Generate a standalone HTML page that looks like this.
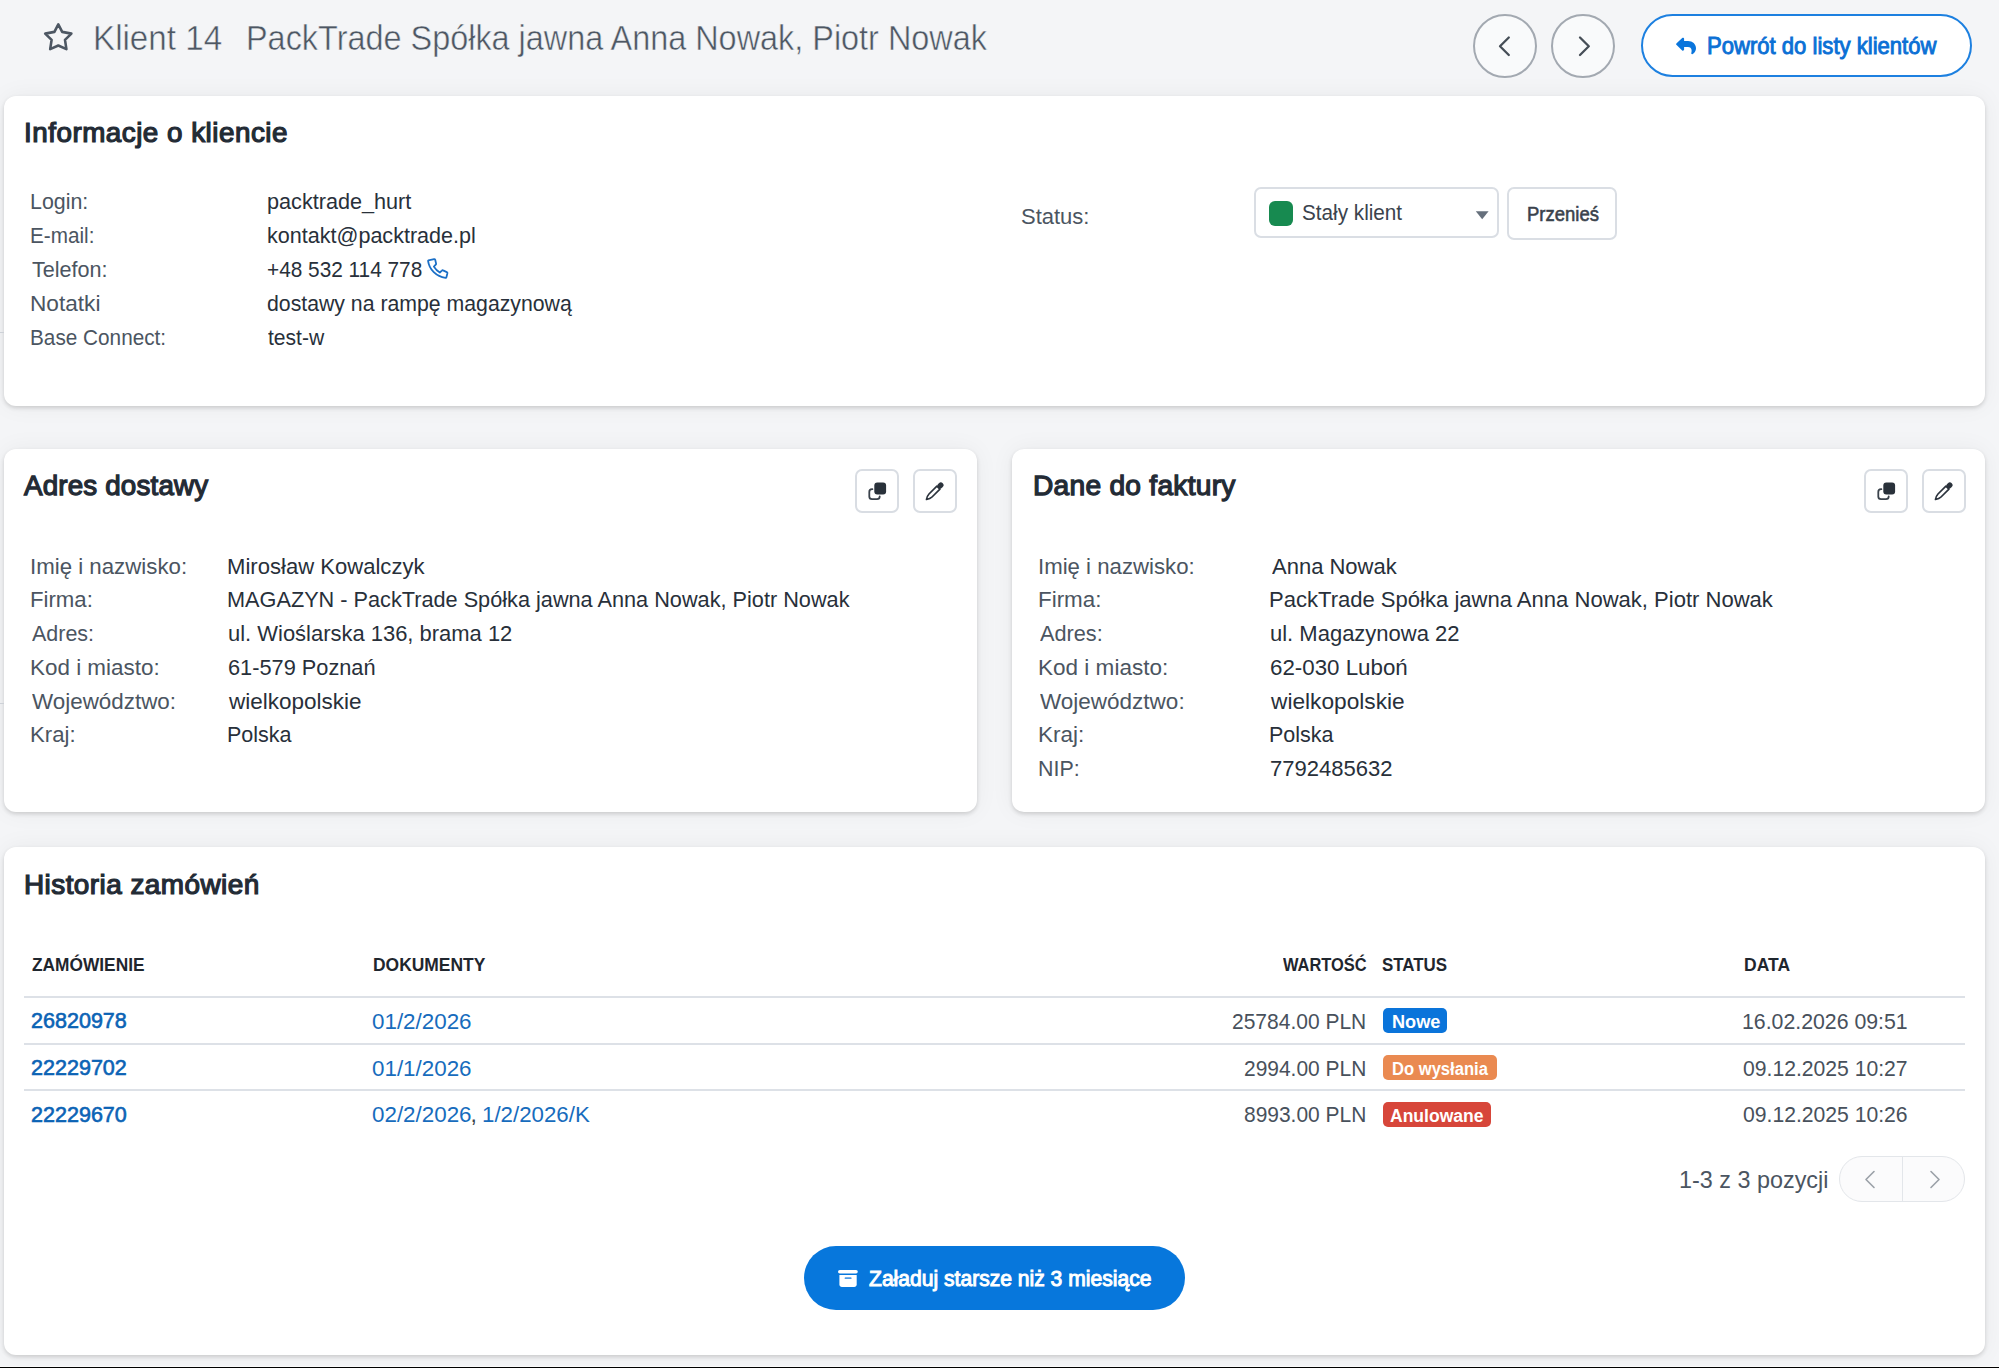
<!DOCTYPE html>
<html><head><meta charset="utf-8">
<style>
html,body{margin:0;padding:0;}
body{width:1999px;height:1368px;background:#f4f5f7;position:relative;overflow:hidden;font-family:"Liberation Sans",sans-serif;}
.t{position:absolute;white-space:nowrap;font-family:"Liberation Sans",sans-serif;}
.card{position:absolute;background:#fff;border-radius:12px;box-shadow:0 0 24px rgba(0,0,0,0.05),0 2px 4px rgba(0,0,0,0.15);}
.abs{position:absolute;}
.circ{position:absolute;width:60px;height:60px;border:2px solid #a3a9b1;border-radius:50%;background:#f9fafb;}
.ibtn{position:absolute;width:40px;height:40px;border:2px solid #d9dde3;border-radius:7px;background:#fff;}
.line{position:absolute;left:24px;width:1941px;height:2px;background:#dde1e7;}
.badge{position:absolute;border-radius:5px;}
</style></head>
<body>
<!-- title star -->
<svg class="abs" style="left:40px;top:19px" width="36" height="36" viewBox="40 19 36 36">
<path d="M58.3,24.4 L62.2,31.9 L71.4,33.6 L65,39.9 L66.4,49.1 L58.3,45.5 L50.2,49.1 L51.6,39.9 L45.2,33.6 L54.4,31.9 Z" fill="none" stroke="#4d5763" stroke-width="2.6" stroke-linejoin="round"/>
</svg>
<!-- nav circles -->
<div class="circ" style="left:1473px;top:14px"></div>
<div class="circ" style="left:1551px;top:14px"></div>
<svg class="abs" style="left:1460px;top:0" width="160" height="90" viewBox="1460 0 160 90">
<path d="M1508.8,37.5 L1500,46.3 L1508.8,55" fill="none" stroke="#464e57" stroke-width="2.3" stroke-linecap="round" stroke-linejoin="round"/>
<path d="M1580,37.5 L1588.8,46.3 L1580,55" fill="none" stroke="#464e57" stroke-width="2.3" stroke-linecap="round" stroke-linejoin="round"/>
</svg>
<!-- back button -->
<div class="abs" style="left:1641px;top:14px;width:327px;height:59px;border:2px solid #1d80e0;border-radius:32px;background:#fff"></div>
<svg class="abs" style="left:1670px;top:30px" width="32" height="30" viewBox="1670 30 32 30">
<path d="M1676.6,43.3 L1682.2,38 C1682.9,37.3 1684.1,37.8 1684.1,38.8 L1684.1,41 L1688,41 C1692.6,41 1696,44.2 1696,48.2 C1696,50.6 1694.8,52.6 1692.7,54.1 C1691.9,54.6 1691,54 1691.3,53.1 C1692.2,50.6 1691.6,47.1 1688,47.1 L1684.1,47.1 L1684.1,49.6 C1684.1,50.6 1682.9,51.1 1682.2,50.4 L1676.6,45.1 C1676,44.6 1676,43.8 1676.6,43.3 Z" fill="#0a75dc"/>
</svg>

<!-- card 1 -->
<div class="card" style="left:4px;top:96px;width:1981px;height:310px"></div>
<svg class="abs" style="left:424px;top:255px" width="28" height="28" viewBox="424 255 28 28">
<path d="M428.4,260.4 L434.1,259.2 C434.6,259.1 435,259.3 435.2,259.8 L436.1,263.6 C436.2,264 436,264.4 435.7,264.7 L433.9,266.6 C435.4,269.1 437.4,271.1 439.8,272.5 L441.9,270.6 C442.2,270.3 442.7,270.2 443.1,270.4 L446.8,272.1 C447.3,272.3 447.5,272.8 447.4,273.3 L446.4,277.2 C446.3,277.6 445.9,277.9 445.5,277.8 C436.2,276.6 429.3,269.6 428.1,261.2 C428,260.8 428.1,260.5 428.4,260.4 Z" fill="none" stroke="#1b6fc6" stroke-width="1.8" stroke-linejoin="round"/>
</svg>
<!-- status dropdown -->
<div class="abs" style="box-sizing:border-box;left:1254px;top:187px;width:245px;height:51px;border:2px solid #dadee4;border-radius:7px;background:#fff"></div>
<div class="abs" style="left:1269px;top:201px;width:24.3px;height:24.8px;border-radius:6px;background:#178a50"></div>
<svg class="abs" style="left:1470px;top:205px" width="24" height="20" viewBox="1470 205 24 20">
<path d="M1475.8,211.2 L1488.6,211.2 L1482.2,219.2 Z" fill="#66707c"/>
</svg>
<div class="abs" style="box-sizing:border-box;left:1507px;top:187px;width:110px;height:53px;border:2px solid #dadee4;border-radius:7px;background:#fff"></div>

<!-- card 2 -->
<div class="card" style="left:4px;top:449px;width:973px;height:363px"></div>
<div class="ibtn" style="left:855px;top:469px"></div>
<div class="ibtn" style="left:913px;top:469px"></div>
<!-- card 3 -->
<div class="card" style="left:1012px;top:449px;width:973px;height:363px"></div>
<div class="ibtn" style="left:1864px;top:469px"></div>
<div class="ibtn" style="left:1922px;top:469px"></div>
<svg class="abs" style="left:0;top:460px" width="1999" height="60" viewBox="0 460 1999 60">
<defs>
<g id="copyic">
<path d="M872.4,489.2 L872,489.2 C870.5,489.2 869.3,490.4 869.3,491.9 L869.3,496.5 C869.3,498 870.5,499.2 872,499.2 L877,499.2 C878.5,499.2 879.7,498 879.7,496.5 L879.7,496.4" fill="none" stroke="#3a424b" stroke-width="1.8" stroke-linecap="round"/>
<rect x="874.3" y="482.4" width="11.8" height="12.2" rx="3" fill="#29313a"/>
</g>
<g id="pencil">
<path d="M926.5,499.5 C926.9,497.4 927.7,495.3 928.98,493.98 L936.90,486.06 L939.94,489.10 L932.02,497.02 C930.7,498.3 928.6,499.1 926.5,499.5 Z" fill="none" stroke="#2b333c" stroke-width="1.7" stroke-linejoin="round"/>
<line x1="940.05" y1="485.95" x2="940.82" y2="485.18" stroke="#2b333c" stroke-width="5.4" stroke-linecap="round"/>
</g>
</defs>
<use href="#copyic"/>
<use href="#pencil"/>
<use href="#copyic" x="1009"/>
<use href="#pencil" x="1009"/>
</svg>

<!-- card 4 -->
<div class="card" style="left:4px;top:847px;width:1981px;height:508px"></div>
<div class="line" style="top:996px"></div>
<div class="line" style="top:1043px"></div>
<div class="line" style="top:1089px"></div>
<div class="badge" style="left:1383px;top:1008px;width:64px;height:25px;background:#0a74da"></div>
<div class="badge" style="left:1383px;top:1055px;width:114px;height:25px;background:#ea8a51"></div>
<div class="badge" style="left:1383px;top:1102px;width:108px;height:25px;background:#d7463a"></div>
<!-- pagination -->
<div class="abs" style="left:1839px;top:1156px;width:124px;height:44px;border:1px solid #e3e6ea;border-radius:23px;background:#fbfbfc"></div>
<div class="abs" style="left:1902px;top:1157px;width:1px;height:44px;background:#e3e6ea"></div>
<svg class="abs" style="left:1850px;top:1160px" width="110" height="40" viewBox="1850 1160 110 40">
<path d="M1874,1171.5 L1866,1179.5 L1874,1187.5" fill="none" stroke="#9aa0a7" stroke-width="1.6" stroke-linecap="round" stroke-linejoin="round"/>
<path d="M1931,1171.5 L1939,1179.5 L1931,1187.5" fill="none" stroke="#9aa0a7" stroke-width="1.6" stroke-linecap="round" stroke-linejoin="round"/>
</svg>
<!-- load button -->
<div class="abs" style="left:804px;top:1246px;width:381px;height:64px;border-radius:32px;background:#0777dc"></div>
<svg class="abs" style="left:834px;top:1265px" width="28" height="26" viewBox="834 1265 28 26">
<rect x="838" y="1270" width="19.8" height="3.6" rx="1.8" fill="#fff"/>
<path d="M839.4,1274.9 L856.7,1274.9 L856.7,1284.4 C856.7,1285.8 855.6,1286.9 854.2,1286.9 L841.9,1286.9 C840.5,1286.9 839.4,1285.8 839.4,1284.4 Z" fill="#fff"/>
<rect x="844.6" y="1277.3" width="7" height="1.7" rx="0.85" fill="#4f9be4"/>
</svg>

<div class="abs" style="left:0;top:332px;width:4px;height:1px;background:#cdd1d7"></div>
<div class="abs" style="left:0;top:703px;width:4px;height:1px;background:#cdd1d7"></div>
<div class="t" style="left:92.90px;top:20.96px;font-size:34.88px;line-height:34.88px;color:#4d5763;letter-spacing:0.000px;-webkit-text-stroke:0.50px #f4f5f7;transform:scaleX(0.9514);transform-origin:0 0;">Klient 14</div>
<div class="t" style="left:245.98px;top:20.96px;font-size:34.88px;line-height:34.88px;color:#4d5763;letter-spacing:0.000px;-webkit-text-stroke:0.50px #f4f5f7;transform:scaleX(0.9293);transform-origin:0 0;">PackTrade Spółka jawna Anna Nowak, Piotr Nowak</div>
<div class="t" style="left:1707.02px;top:35.23px;font-size:23.11px;line-height:23.11px;color:#0b70d5;letter-spacing:0.000px;-webkit-text-stroke:0.92px #0b70d5;transform:scaleX(0.9553);transform-origin:0 0;">Powrót do listy klientów</div>
<div class="t" style="left:23.98px;top:118.94px;font-size:27.47px;line-height:27.47px;color:#232b35;letter-spacing:0.510px;-webkit-text-stroke:1.24px #232b35;transform:scaleX(1.0109);transform-origin:0 0;">Informacje o kliencie</div>
<div class="t" style="left:29.84px;top:190.26px;font-size:22.97px;line-height:22.97px;color:#4b5561;letter-spacing:0.000px;transform:scaleX(0.9317);transform-origin:0 0;">Login:</div>
<div class="t" style="left:267.19px;top:190.26px;font-size:22.97px;line-height:22.97px;color:#28303a;letter-spacing:0.000px;transform:scaleX(0.9419);transform-origin:0 0;">packtrade_hurt</div>
<div class="t" style="left:29.88px;top:224.11px;font-size:22.97px;line-height:22.97px;color:#4b5561;letter-spacing:0.000px;transform:scaleX(0.9018);transform-origin:0 0;">E-mail:</div>
<div class="t" style="left:267.19px;top:224.11px;font-size:22.97px;line-height:22.97px;color:#28303a;letter-spacing:0.000px;transform:scaleX(0.9386);transform-origin:0 0;">kontakt@packtrade.pl</div>
<div class="t" style="left:32.00px;top:257.96px;font-size:22.97px;line-height:22.97px;color:#4b5561;letter-spacing:0.000px;transform:scaleX(0.9393);transform-origin:0 0;">Telefon:</div>
<div class="t" style="left:267.19px;top:257.96px;font-size:22.97px;line-height:22.97px;color:#28303a;letter-spacing:0.000px;transform:scaleX(0.9058);transform-origin:0 0;">+48 532 114 778</div>
<div class="t" style="left:29.89px;top:291.81px;font-size:22.97px;line-height:22.97px;color:#4b5561;letter-spacing:0.000px;transform:scaleX(0.9850);transform-origin:0 0;">Notatki</div>
<div class="t" style="left:267.19px;top:291.81px;font-size:22.97px;line-height:22.97px;color:#28303a;letter-spacing:0.000px;transform:scaleX(0.9253);transform-origin:0 0;">dostawy na rampę magazynową</div>
<div class="t" style="left:29.94px;top:325.66px;font-size:22.97px;line-height:22.97px;color:#4b5561;letter-spacing:0.000px;transform:scaleX(0.9035);transform-origin:0 0;">Base Connect:</div>
<div class="t" style="left:268.21px;top:325.66px;font-size:22.97px;line-height:22.97px;color:#28303a;letter-spacing:0.000px;transform:scaleX(0.9177);transform-origin:0 0;">test-w</div>
<div class="t" style="left:1021.16px;top:205.26px;font-size:22.97px;line-height:22.97px;color:#4b5561;letter-spacing:0.000px;transform:scaleX(0.9572);transform-origin:0 0;">Status:</div>
<div class="t" style="left:1302.48px;top:201.30px;font-size:22.67px;line-height:22.67px;color:#3b434d;letter-spacing:0.000px;transform:scaleX(0.9138);transform-origin:0 0;">Stały klient</div>
<div class="t" style="left:1527.17px;top:203.60px;font-size:20.79px;line-height:20.79px;color:#3a424c;letter-spacing:0.000px;-webkit-text-stroke:0.58px #3a424c;transform:scaleX(0.8897);transform-origin:0 0;">Przenieś</div>
<div class="t" style="left:24.49px;top:471.75px;font-size:28.05px;line-height:28.05px;color:#232b35;letter-spacing:0.162px;-webkit-text-stroke:1.26px #232b35;transform:scaleX(0.9904);transform-origin:0 0;">Adres dostawy</div>
<div class="t" style="left:1032.60px;top:471.75px;font-size:28.05px;line-height:28.05px;color:#232b35;letter-spacing:0.257px;-webkit-text-stroke:1.26px #232b35;transform:scaleX(1.0041);transform-origin:0 0;">Dane do faktury</div>
<div class="t" style="left:29.95px;top:554.76px;font-size:22.97px;line-height:22.97px;color:#4b5561;letter-spacing:0.000px;transform:scaleX(0.9691);transform-origin:0 0;">Imię i nazwisko:</div>
<div class="t" style="left:1038.35px;top:554.76px;font-size:22.97px;line-height:22.97px;color:#4b5561;letter-spacing:0.000px;transform:scaleX(0.9667);transform-origin:0 0;">Imię i nazwisko:</div>
<div class="t" style="left:29.88px;top:588.46px;font-size:22.97px;line-height:22.97px;color:#4b5561;letter-spacing:0.000px;transform:scaleX(0.9655);transform-origin:0 0;">Firma:</div>
<div class="t" style="left:1038.24px;top:588.46px;font-size:22.97px;line-height:22.97px;color:#4b5561;letter-spacing:0.000px;transform:scaleX(0.9750);transform-origin:0 0;">Firma:</div>
<div class="t" style="left:32.00px;top:622.16px;font-size:22.97px;line-height:22.97px;color:#4b5561;letter-spacing:0.000px;transform:scaleX(0.9349);transform-origin:0 0;">Adres:</div>
<div class="t" style="left:1040.39px;top:622.16px;font-size:22.97px;line-height:22.97px;color:#4b5561;letter-spacing:0.000px;transform:scaleX(0.9443);transform-origin:0 0;">Adres:</div>
<div class="t" style="left:29.93px;top:655.86px;font-size:22.97px;line-height:22.97px;color:#4b5561;letter-spacing:0.000px;transform:scaleX(0.9763);transform-origin:0 0;">Kod i miasto:</div>
<div class="t" style="left:1038.32px;top:655.86px;font-size:22.97px;line-height:22.97px;color:#4b5561;letter-spacing:0.000px;transform:scaleX(0.9809);transform-origin:0 0;">Kod i miasto:</div>
<div class="t" style="left:32.00px;top:689.56px;font-size:22.97px;line-height:22.97px;color:#4b5561;letter-spacing:0.000px;transform:scaleX(0.9753);transform-origin:0 0;">Województwo:</div>
<div class="t" style="left:1040.40px;top:689.56px;font-size:22.97px;line-height:22.97px;color:#4b5561;letter-spacing:0.000px;transform:scaleX(0.9795);transform-origin:0 0;">Województwo:</div>
<div class="t" style="left:29.82px;top:723.26px;font-size:22.97px;line-height:22.97px;color:#4b5561;letter-spacing:0.000px;transform:scaleX(0.9649);transform-origin:0 0;">Kraj:</div>
<div class="t" style="left:1038.17px;top:723.26px;font-size:22.97px;line-height:22.97px;color:#4b5561;letter-spacing:0.000px;transform:scaleX(0.9790);transform-origin:0 0;">Kraj:</div>
<div class="t" style="left:1038.19px;top:756.96px;font-size:22.97px;line-height:22.97px;color:#4b5561;letter-spacing:0.000px;transform:scaleX(0.9317);transform-origin:0 0;">NIP:</div>
<div class="t" style="left:227.48px;top:554.76px;font-size:22.97px;line-height:22.97px;color:#28303a;letter-spacing:0.000px;transform:scaleX(0.9613);transform-origin:0 0;">Mirosław Kowalczyk</div>
<div class="t" style="left:227.49px;top:588.46px;font-size:22.97px;line-height:22.97px;color:#28303a;letter-spacing:0.000px;transform:scaleX(0.9444);transform-origin:0 0;">MAGAZYN - PackTrade Spółka jawna Anna Nowak, Piotr Nowak</div>
<div class="t" style="left:228.49px;top:622.16px;font-size:22.97px;line-height:22.97px;color:#28303a;letter-spacing:0.000px;transform:scaleX(0.9558);transform-origin:0 0;">ul. Wioślarska 136, brama 12</div>
<div class="t" style="left:228.49px;top:655.86px;font-size:22.97px;line-height:22.97px;color:#28303a;letter-spacing:0.000px;transform:scaleX(0.9470);transform-origin:0 0;">61-579 Poznań</div>
<div class="t" style="left:229.48px;top:689.56px;font-size:22.97px;line-height:22.97px;color:#28303a;letter-spacing:0.000px;transform:scaleX(0.9793);transform-origin:0 0;">wielkopolskie</div>
<div class="t" style="left:227.39px;top:723.26px;font-size:22.97px;line-height:22.97px;color:#28303a;letter-spacing:0.000px;transform:scaleX(0.9367);transform-origin:0 0;">Polska</div>
<div class="t" style="left:1271.50px;top:554.76px;font-size:22.97px;line-height:22.97px;color:#28303a;letter-spacing:0.000px;transform:scaleX(0.9576);transform-origin:0 0;">Anna Nowak</div>
<div class="t" style="left:1269.49px;top:588.46px;font-size:22.97px;line-height:22.97px;color:#28303a;letter-spacing:0.000px;transform:scaleX(0.9595);transform-origin:0 0;">PackTrade Spółka jawna Anna Nowak, Piotr Nowak</div>
<div class="t" style="left:1270.47px;top:622.16px;font-size:22.97px;line-height:22.97px;color:#28303a;letter-spacing:0.000px;transform:scaleX(0.9577);transform-origin:0 0;">ul. Magazynowa 22</div>
<div class="t" style="left:1270.47px;top:655.86px;font-size:22.97px;line-height:22.97px;color:#28303a;letter-spacing:0.000px;transform:scaleX(0.9716);transform-origin:0 0;">62-030 Luboń</div>
<div class="t" style="left:1271.49px;top:689.56px;font-size:22.97px;line-height:22.97px;color:#28303a;letter-spacing:0.000px;transform:scaleX(0.9882);transform-origin:0 0;">wielkopolskie</div>
<div class="t" style="left:1269.39px;top:723.26px;font-size:22.97px;line-height:22.97px;color:#28303a;letter-spacing:0.000px;transform:scaleX(0.9367);transform-origin:0 0;">Polska</div>
<div class="t" style="left:1270.46px;top:756.96px;font-size:22.97px;line-height:22.97px;color:#28303a;letter-spacing:0.000px;transform:scaleX(0.9593);transform-origin:0 0;">7792485632</div>
<div class="t" style="left:23.98px;top:870.72px;font-size:27.62px;line-height:27.62px;color:#232b35;letter-spacing:0.452px;-webkit-text-stroke:1.24px #232b35;transform:scaleX(1.0105);transform-origin:0 0;">Historia zamówień</div>
<div class="t" style="left:32.00px;top:955.90px;font-size:18.90px;line-height:18.90px;color:#1f262e;letter-spacing:0.000px;font-weight:bold;transform:scaleX(0.9164);transform-origin:0 0;">ZAMÓWIENIE</div>
<div class="t" style="left:373.18px;top:955.90px;font-size:18.90px;line-height:18.90px;color:#1f262e;letter-spacing:0.000px;font-weight:bold;transform:scaleX(0.9227);transform-origin:0 0;">DOKUMENTY</div>
<div class="t" style="left:1282.69px;top:955.90px;font-size:18.90px;line-height:18.90px;color:#1f262e;letter-spacing:0.000px;font-weight:bold;transform:scaleX(0.8701);transform-origin:0 0;">WARTOŚĆ</div>
<div class="t" style="left:1382.35px;top:955.90px;font-size:18.90px;line-height:18.90px;color:#1f262e;letter-spacing:0.000px;font-weight:bold;transform:scaleX(0.8942);transform-origin:0 0;">STATUS</div>
<div class="t" style="left:1743.98px;top:955.90px;font-size:18.90px;line-height:18.90px;color:#1f262e;letter-spacing:0.000px;font-weight:bold;transform:scaleX(0.9270);transform-origin:0 0;">DATA</div>
<div class="t" style="left:31.38px;top:1010.22px;font-size:22.53px;line-height:22.53px;color:#0b63b5;letter-spacing:0.000px;-webkit-text-stroke:0.63px #0b63b5;transform:scaleX(0.9566);transform-origin:0 0;">26820978</div>
<div class="t" style="left:31.39px;top:1056.92px;font-size:22.53px;line-height:22.53px;color:#0b63b5;letter-spacing:0.000px;-webkit-text-stroke:0.63px #0b63b5;transform:scaleX(0.9566);transform-origin:0 0;">22229702</div>
<div class="t" style="left:31.38px;top:1103.72px;font-size:22.53px;line-height:22.53px;color:#0b63b5;letter-spacing:0.000px;-webkit-text-stroke:0.63px #0b63b5;transform:scaleX(0.9566);transform-origin:0 0;">22229670</div>
<div class="t" style="left:372.27px;top:1009.86px;font-size:22.97px;line-height:22.97px;color:#176cbd;letter-spacing:0.000px;transform:scaleX(0.9742);transform-origin:0 0;">01/2/2026</div>
<div class="t" style="left:372.27px;top:1056.56px;font-size:22.97px;line-height:22.97px;color:#176cbd;letter-spacing:0.000px;transform:scaleX(0.9742);transform-origin:0 0;">01/1/2026</div>
<div class="t" style="left:372.27px;top:1103.36px;font-size:22.97px;line-height:22.97px;color:#176cbd;letter-spacing:0.000px;transform:scaleX(0.9742);transform-origin:0 0;">02/2/2026</div>
<div class="t" style="left:470.50px;top:1103.36px;font-size:22.97px;line-height:22.97px;color:#3a424c;letter-spacing:0.000px;">,</div>
<div class="t" style="left:481.75px;top:1103.36px;font-size:22.97px;line-height:22.97px;color:#176cbd;letter-spacing:0.000px;transform:scaleX(0.9700);transform-origin:0 0;">1/2/2026/K</div>
<div class="t" style="left:1232.47px;top:1009.86px;font-size:22.97px;line-height:22.97px;color:#48515c;letter-spacing:0.000px;transform:scaleX(0.9141);transform-origin:0 0;">25784.00 PLN</div>
<div class="t" style="left:1244.46px;top:1056.56px;font-size:22.97px;line-height:22.97px;color:#48515c;letter-spacing:0.000px;transform:scaleX(0.9118);transform-origin:0 0;">2994.00 PLN</div>
<div class="t" style="left:1244.46px;top:1103.36px;font-size:22.97px;line-height:22.97px;color:#48515c;letter-spacing:0.000px;transform:scaleX(0.9118);transform-origin:0 0;">8993.00 PLN</div>
<div class="t" style="left:1742.35px;top:1009.86px;font-size:22.97px;line-height:22.97px;color:#48515c;letter-spacing:0.000px;transform:scaleX(0.9265);transform-origin:0 0;">16.02.2026 09:51</div>
<div class="t" style="left:1743.38px;top:1056.56px;font-size:22.97px;line-height:22.97px;color:#48515c;letter-spacing:0.000px;transform:scaleX(0.9207);transform-origin:0 0;">09.12.2025 10:27</div>
<div class="t" style="left:1743.38px;top:1103.36px;font-size:22.97px;line-height:22.97px;color:#48515c;letter-spacing:0.000px;transform:scaleX(0.9206);transform-origin:0 0;">09.12.2025 10:26</div>
<div class="t" style="left:1391.84px;top:1012.48px;font-size:19.04px;line-height:19.04px;color:#ffffff;letter-spacing:0.000px;font-weight:bold;transform:scaleX(0.9529);transform-origin:0 0;">Nowe</div>
<div class="t" style="left:1391.90px;top:1059.62px;font-size:18.75px;line-height:18.75px;color:#ffffff;letter-spacing:0.000px;font-weight:bold;transform:scaleX(0.8851);transform-origin:0 0;">Do wysłania</div>
<div class="t" style="left:1390.27px;top:1106.62px;font-size:18.75px;line-height:18.75px;color:#ffffff;letter-spacing:0.000px;font-weight:bold;transform:scaleX(0.9352);transform-origin:0 0;">Anulowane</div>
<div class="t" style="left:1679.14px;top:1168.07px;font-size:24.13px;line-height:24.13px;color:#4b5561;letter-spacing:0.000px;transform:scaleX(0.9689);transform-origin:0 0;">1-3 z 3 pozycji</div>
<div class="t" style="left:868.99px;top:1268.59px;font-size:21.51px;line-height:21.51px;color:#ffffff;letter-spacing:0.000px;-webkit-text-stroke:0.97px #ffffff;transform:scaleX(0.9806);transform-origin:0 0;">Załaduj starsze niż 3 miesiące</div>
<div class="abs" style="left:0;top:1366px;width:1999px;height:1px;background:#fafafa"></div>
<div class="abs" style="left:0;top:1367px;width:1999px;height:1px;background:#000"></div>
</body></html>
